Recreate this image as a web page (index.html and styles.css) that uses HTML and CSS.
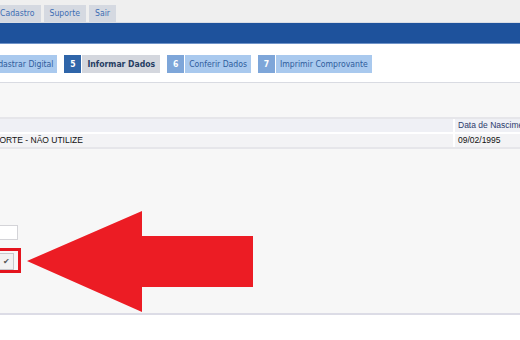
FILE: index.html
```html
<!DOCTYPE html>
<html lang="pt-BR">
<head>
  <meta charset="UTF-8"/>
  <title>Informar Dados</title>
  <link rel="stylesheet" href="styles.css">
</head>
<body>
  <div class="topbar">
    <ul class="tabs">
      <li>Cadastro</li>
      <li>Suporte</li>
      <li>Sair</li>
    </ul>
  </div>
  <div class="bluebar"></div>

  <div class="steps">
    <div class="step done"><span class="label">Cadastrar Digital</span></div>
    <div class="step current"><span class="num">5</span><span class="label">Informar Dados</span></div>
    <div class="step"><span class="num">6</span><span class="label">Conferir Dados</span></div>
    <div class="step"><span class="num">7</span><span class="label">Imprimir Comprovante</span></div>
  </div>

  <div class="content">
    <div class="data">
      <div class="row head">
        <div class="name"></div>
        <div class="birth">Data de Nascimento</div>
      </div>
      <div class="row">
        <div class="name">SUPORTE - NÃO UTILIZE</div>
        <div class="birth">09/02/1995</div>
      </div>
    </div>

    <div class="form">
      <input class="field" type="text">
      <div class="mark">
        <button class="confirm">&#10004;</button>
      </div>
    </div>

    <svg class="arrow" viewBox="0 0 240 110" width="240" height="110">
      <polygon points="0,50 115,0 115,25 226,25 226,76 115,76 115,101" fill="#ec1c24"/>
    </svg>
  </div>
</body>
</html>
```

FILE: styles.css
```css
* {
  margin: 0;
  padding: 0;
  box-sizing: border-box;
}
body {
  background: #fff;
  font-family: Tahoma, "DejaVu Sans Condensed", "DejaVu Sans", sans-serif;
  font-size: 8.6px;
  width: 520px;
  height: 340px;
  overflow: hidden;
}
.topbar {
  height: 23px;
  background: #efefef;
  border-bottom: 1px solid #d9dde4;
  display: flex;
  align-items: flex-end;
}
.tabs {
  list-style: none;
  display: flex;
  gap: 3px;
  margin-left: -12px;
}
.tabs li {
  background: #d5d9e1;
  color: #3d6db3;
  height: 17px;
  line-height: 17px;
  padding: 0 6px;
}
.tabs li:first-child {
  padding-left: 12px;
}
.bluebar {
  height: 21px;
  background: #1e529c;
  border-bottom: 1px solid #6f93c8;
}
.steps {
  display: flex;
  gap: 7px;
  padding: 11px 0 9px;
  margin-left: -16px;
  border-bottom: 1px solid #d9dbe2;
}
.step {
  display: flex;
  height: 18px;
  line-height: 18px;
  gap: 1px;
}
.step .num {
  width: 17px;
  text-align: center;
  background: #7ea6d9;
  color: #fff;
  font-weight: bold;
}
.step .label {
  background: #a9c9ee;
  color: #2e5c9c;
  padding: 0 4px;
}
.step.current .num {
  background: #2f65a9;
}
.step.current .label {
  background: #d4d7de;
  color: #263d63;
  font-weight: bold;
  padding: 0 5px;
}
.content {
  position: relative;
  background: #f7f7f7;
  height: 232px;
  border-bottom: 2px solid #dcdce6;
  padding-top: 34px;
}
.data {
  width: 560px;
  margin-left: -21px;
  font-family: "Liberation Sans", Arial, sans-serif;
  font-size: 8.5px;
  border-top: 2px solid #e6e6ea;
  border-bottom: 2px solid #e6e6ea;
}
.row {
  display: grid;
  grid-template-columns: 474px 1fr;
  background: #f3f3f5;
  color: #111;
}
.row > div {
  height: 13px;
  line-height: 13px;
  padding: 0 3px;
  white-space: nowrap;
  overflow: hidden;
}
.row.head {
  background: #eff0f5;
  color: #2c3b6c;
  border-bottom: 2px solid #fff;
}
.row .birth {
  border-left: 2px solid #fff;
}
.form {
  margin-top: 76px;
  margin-left: -30px;
  display: flex;
  flex-direction: column;
  gap: 8px;
}
.field {
  width: 48px;
  height: 15px;
  border: 1px solid #d4d4d8;
  background: #fff;
}
.mark {
  width: 51px;
  height: 25px;
  border: 3px solid #e4141e;
  padding: 2px 4px 0 0;
  display: flex;
  justify-content: flex-end;
}
.confirm {
  width: 16px;
  height: 17px;
  border: 1px solid #c8c8cc;
  background: #f2f2f2;
  color: #555;
  font-size: 8px;
  line-height: 15px;
  text-align: center;
}
.arrow {
  position: absolute;
  left: 27px;
  top: 128px;
}
```
